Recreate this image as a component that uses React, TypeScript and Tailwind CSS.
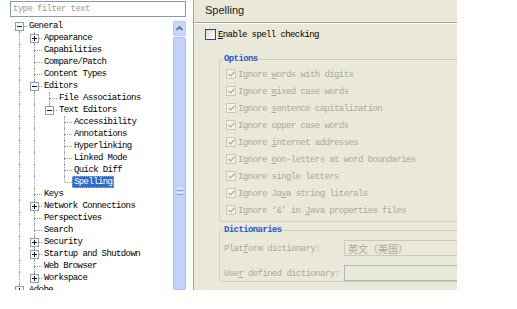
import React from 'react';

type Node = { label: string; state?: 'open' | 'closed'; children?: Node[] };
type Row = {
  label: string;
  level: number;
  guides: boolean[];
  hasNext: boolean;
  first: boolean;
  state?: 'open' | 'closed';
};

const leaves = (names: string[]): Node[] => names.map((label) => ({ label }));

const tree: Node[] = [
  {
    label: 'General',
    state: 'open',
    children: [
      { label: 'Appearance', state: 'closed' },
      ...leaves(['Capabilities', 'Compare/Patch', 'Content Types']),
      {
        label: 'Editors',
        state: 'open',
        children: [
          { label: 'File Associations' },
          {
            label: 'Text Editors',
            state: 'open',
            children: leaves([
              'Accessibility',
              'Annotations',
              'Hyperlinking',
              'Linked Mode',
              'Quick Diff',
              'Spelling',
            ]),
          },
        ],
      },
      { label: 'Keys' },
      { label: 'Network Connections', state: 'closed' },
      ...leaves(['Perspectives', 'Search']),
      { label: 'Security', state: 'closed' },
      { label: 'Startup and Shutdown', state: 'closed' },
      { label: 'Web Browser' },
      { label: 'Workspace', state: 'closed' },
    ],
  },
  { label: 'Adobe', state: 'closed' },
];

function flatten(nodes: Node[], level = 0, guides: boolean[] = [], out: Row[] = []) {
  nodes.forEach((n, i) => {
    const hasNext = i < nodes.length - 1;
    out.push({ label: n.label, level, guides, hasNext, first: out.length === 0, state: n.state });
    if (n.children) flatten(n.children, level + 1, [...guides, hasNext], out);
  });
  return out;
}

const rows = flatten(tree);
const mono = "font-['Liberation_Mono',monospace] text-[9px] tracking-[-0.6px]";

function Toggle({ plus }: { plus: boolean }) {
  return (
    <svg className="absolute left-[3px] top-[2px]" width="9" height="9" viewBox="0 0 9 9">
      <rect x="0.5" y="0.5" width="8" height="8" fill="#f7f7f4" stroke="#8c9fb6" />
      <path d="M2 4.5h5" stroke="#1a1a1a" />
      {plus && <path d="M4.5 2v5" stroke="#1a1a1a" />}
    </svg>
  );
}

function TreeRow({ row }: { row: Row }) {
  const selected = row.label === 'Spelling';
  return (
    <div className="flex h-[12px] items-center">
      {row.guides.map((g, i) => (
        <span key={i} className="relative h-full w-[15px] flex-none">
          {g && <span className="absolute left-[7px] top-0 h-full border-l border-dotted border-[#9a9a9a]" />}
        </span>
      ))}
      <span className="relative h-full w-[15px] flex-none">
        {!row.first && (
          <span className="absolute left-[7px] top-0 h-[6px] border-l border-dotted border-[#9a9a9a]" />
        )}
        {row.hasNext && (
          <span className="absolute left-[7px] top-[6px] h-[6px] border-l border-dotted border-[#9a9a9a]" />
        )}
        <span className="absolute left-[8px] right-0 top-[6px] border-t border-dotted border-[#9a9a9a]" />
        {row.state && <Toggle plus={row.state === 'closed'} />}
      </span>
      <span
        className={
          selected
            ? `${mono} h-full whitespace-nowrap bg-[#316ac5] px-[2px] pt-[1px] leading-[11px] text-white outline outline-1 -outline-offset-1 outline-dotted outline-[#9cb4e0]`
            : `${mono} h-full whitespace-nowrap px-[2px] pt-[1px] leading-[11px] text-black`
        }
      >
        {row.label}
      </span>
    </div>
  );
}

function Scrollbar() {
  return (
    <div className="flex w-[13px] flex-none flex-col bg-[#f4f3ee]">
      <div className="mt-[1px] flex h-[15px] items-center justify-center rounded-[2px] border border-[#b7c9f5] bg-[#c7d6fc]">
        <svg width="7" height="5" viewBox="0 0 7 5">
          <path d="M0.5 4L3.5 1L6.5 4" fill="none" stroke="#4d6185" strokeWidth="1.5" />
        </svg>
      </div>
      <div className="mt-[1px] flex flex-1 flex-col items-center rounded-[2px] border border-[#aebff0] bg-[#c3d2fc] pt-[150px]">
        <div className="flex flex-col gap-[1px]">
          <span className="h-[1px] w-[6px] bg-[#eef2fe]" />
          <span className="h-[1px] w-[6px] bg-[#8ca4e6]" />
          <span className="h-[1px] w-[6px] bg-[#eef2fe]" />
          <span className="h-[1px] w-[6px] bg-[#8ca4e6]" />
        </div>
      </div>
    </div>
  );
}

function Check({ enabled }: { enabled?: boolean }) {
  if (enabled)
    return (
      <span className="h-[11px] w-[11px] flex-none border border-[#1c5180] bg-gradient-to-br from-[#dcdcd7] to-white" />
    );
  return (
    <span className="flex h-[10px] w-[10px] flex-none items-center justify-center border border-[#cac8bb] bg-[#f3f2ec]">
      <svg width="7" height="6" viewBox="0 0 7 6">
        <path d="M0.5 3L2.5 5L6.5 0.8" fill="none" stroke="#b3b1a4" strokeWidth="1.4" />
      </svg>
    </span>
  );
}

const options: React.ReactNode[] = [
  <>Ignore <u>w</u>ords with digits</>,
  <>Ignore <u>m</u>ixed case words</>,
  <>Ignore <u>s</u>entence capitalization</>,
  <>Ignore upper case words</>,
  <>Ignore <u>i</u>nternet addresses</>,
  <>Ignore <u>n</u>on-letters at word boundaries</>,
  <>Ignore single letters</>,
  <>Ignore Ja<u>v</u>a string literals</>,
  <>Ignore ‘&amp;’ in <u>J</u>ava properties files</>,
];

function Group({ title, children }: { title: string; children: React.ReactNode }) {
  return (
    <div className="ml-[25px] w-[300px] rounded-[3px] border border-[#d0cfbf]">
      <div className="-mt-[7px] ml-[3px] flex h-[12px]">
        <span className={`${mono} bg-[#eae8d9] px-[1px] pt-[1px] font-bold leading-[11px] text-[#2c55c9]`}>{title}</span>
      </div>
      {children}
    </div>
  );
}

export default function App() {
  return (
    <div className="flex h-[309px] w-[517px] overflow-hidden bg-white">
      <div className="ml-[10px] flex w-[176px] flex-none flex-col">
        <div className="mt-[1px] flex h-[16px] items-center border border-[#7f9db9] bg-white pl-[2px]">
          <span className={`${mono} pt-[1px] text-[#9a9a9a]`}>type filter text</span>
        </div>
        <div className="mt-[3px] flex h-[270px] bg-white">
          <div className="flex-1 overflow-hidden pl-[2px]">
            {rows.map((r) => (
              <TreeRow key={r.label} row={r} />
            ))}
          </div>
          <Scrollbar />
        </div>
      </div>

      <div className="ml-[7px] flex h-[290px] w-[264px] flex-none flex-col overflow-hidden border-l border-[#a7a696] bg-[#eae8d9]">
        <div className="flex h-[22px] flex-none items-center pb-[2px] pl-[11px] font-['Liberation_Sans',sans-serif] text-[11px] text-[#222]">
          Spelling
        </div>
        <div className="h-[1px] flex-none bg-[#aca899]" />
        <div className="h-[1px] flex-none bg-white" />

        <div className="mt-[4px] flex h-[12px] flex-none items-center gap-[2px] pl-[11px]">
          <Check enabled />
          <span className={`${mono} pt-[2px] leading-[12px] text-black`}>
            <u>E</u>nable spell checking
          </span>
        </div>

        <div className="mt-[19px] flex-none">
          <Group title="Options">
            <div className="pb-[3px] pl-[6px]">
              {options.map((o, i) => (
                <div key={i} className="flex h-[17px] items-center gap-[2px]">
                  <Check />
                  <span className={`${mono} whitespace-nowrap pt-[2px] leading-[12px] text-[#aca899]`}>{o}</span>
                </div>
              ))}
            </div>
          </Group>
        </div>

        <div className="mt-[8px] flex-none">
          <Group title="Dictionaries">
            <div className="pl-[4px] pt-[4px]">
              <div className="flex h-[16px] items-center">
                <span className={`${mono} w-[120px] flex-none pt-[2px] leading-[12px] text-[#aca899]`}>
                  Plat<u>f</u>orm dictionary:
                </span>
                <span className="flex h-[16px] flex-1 items-center border border-[#cbc9bb] pl-[3px] font-['Noto_Sans_CJK_SC',sans-serif] text-[10px] text-[#aca899]">
                  英文（美国）
                </span>
              </div>
              <div className="mt-[9px] flex h-[16px] items-center">
                <span className={`${mono} w-[120px] flex-none pt-[2px] leading-[12px] text-[#aca899]`}>
                  Use<u>r</u> defined dictionary:
                </span>
                <span className="h-[16px] flex-1 border border-[#a9b8c8]" />
              </div>
            </div>
          </Group>
        </div>
      </div>
    </div>
  );
}
